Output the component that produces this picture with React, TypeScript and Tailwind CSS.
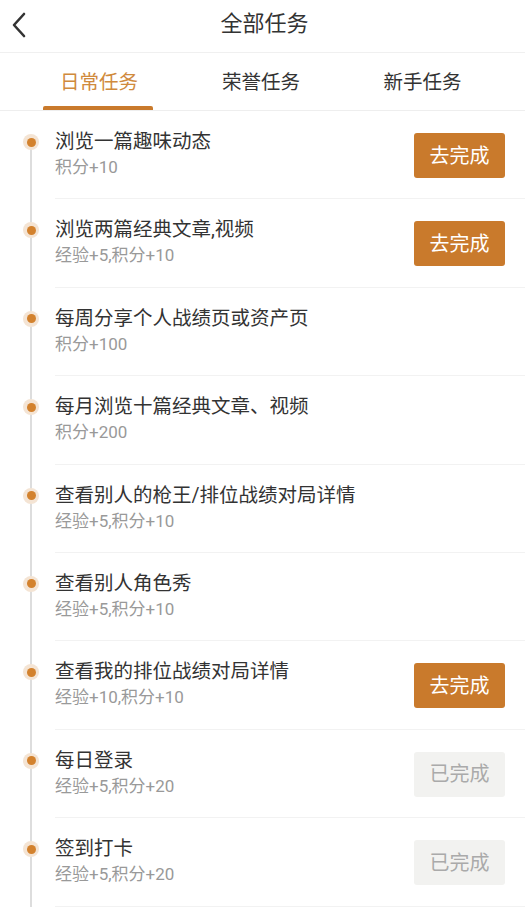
import React from "react";

type Task = { title: string; reward: string; status: "todo" | "done" | "none" };

const tasks: Task[] = [
  { title: "浏览一篇趣味动态", reward: "积分+10", status: "todo" },
  { title: "浏览两篇经典文章,视频", reward: "经验+5,积分+10", status: "todo" },
  { title: "每周分享个人战绩页或资产页", reward: "积分+100", status: "none" },
  { title: "每月浏览十篇经典文章、视频", reward: "积分+200", status: "none" },
  { title: "查看别人的枪王/排位战绩对局详情", reward: "经验+5,积分+10", status: "none" },
  { title: "查看别人角色秀", reward: "经验+5,积分+10", status: "none" },
  { title: "查看我的排位战绩对局详情", reward: "经验+10,积分+10", status: "todo" },
  { title: "每日登录", reward: "经验+5,积分+20", status: "done" },
  { title: "签到打卡", reward: "经验+5,积分+20", status: "done" },
];

const font = { fontFamily: 'Roboto, "Noto Sans CJK SC", "Noto Sans", sans-serif' };

export default function App() {
  return (
    <div className="w-[525px] h-[907px] bg-white overflow-hidden" style={font}>
      {/* Header */}
      <div className="relative h-[53px] flex items-center justify-center border-b border-[#f0f0f0]">
        <svg className="absolute left-[10px] top-[12px]" width="18" height="26" viewBox="0 0 18 26">
          <path d="M14 2 L4 13 L14 24" fill="none" stroke="#333" strokeWidth="2.6" strokeLinecap="round" strokeLinejoin="round" />
        </svg>
        <span className="text-[22px] leading-none text-[#333] -mt-[4px] ml-[4px]">全部任务</span>
      </div>
      {/* Tabs */}
      <div className="h-[58px] flex border-b border-[#eeeeee]">
        <div className="relative w-[196px] flex items-center justify-center">
          <span className="text-[19.5px] text-[#d08a3d] ml-[2px] mt-[3px]">日常任务</span>
          <div className="absolute left-[43px] bottom-[0px] w-[110px] h-[4px] rounded-t-[2px] bg-[#c97a2c]" />
        </div>
        <div className="w-[130px] flex items-center justify-center">
          <span className="text-[19.5px] text-[#333] mt-[3px]">荣誉任务</span>
        </div>
        <div className="flex-1 flex items-center justify-center">
          <span className="text-[19.5px] text-[#333] mt-[3px] mr-[6px]">新手任务</span>
        </div>
      </div>
      {/* List */}
      <div className="relative">
        <div className="absolute left-[30px] top-[30px] bottom-0 w-[2px] bg-[#dddddd]" />
        {tasks.map((t, i) => (
          <div key={i} className="relative h-[88.4px] flex">
            <div className="w-[55px] relative shrink-0">
              <div className="absolute left-[23px] top-[23px] w-[16px] h-[16px] rounded-full bg-[#f4e4d4] flex items-center justify-center">
                <div className="w-[9px] h-[9px] rounded-full bg-[#d3822e]" />
              </div>
            </div>
            <div className="flex-1 flex items-start border-b border-[#f2f2f2] pr-[20px]">
              <div className="flex-1 pt-[17px]">
                <div className="text-[19.5px] leading-[27px] text-[#333]">{t.title}</div>
                <div className="text-[17px] leading-[22px] text-[#999] mt-[1px]">{t.reward}</div>
              </div>
              {t.status === "todo" && (
                <div className="mt-[22px] w-[91px] h-[45px] rounded-[3px] bg-[#c97a2c] flex items-center justify-center text-[20px] text-white">
                  去完成
                </div>
              )}
              {t.status === "done" && (
                <div className="mt-[22px] w-[91px] h-[45px] rounded-[3px] bg-[#f2f2f0] flex items-center justify-center text-[20px] text-[#aaaaaa]">
                  已完成
                </div>
              )}
            </div>
          </div>
        ))}
      </div>
    </div>
  );
}
